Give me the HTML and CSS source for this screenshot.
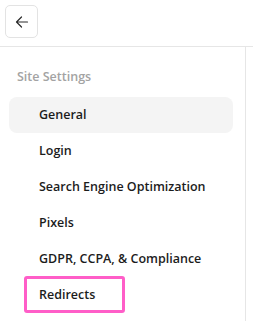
FILE: index.html
```html
<!DOCTYPE html>
<html lang="en">
<head>
  <meta charset="UTF-8" />
  <meta name="viewport" content="width=device-width, initial-scale=1" />
  <title>Site Settings</title>
  <link rel="stylesheet" href="styles.css">
</head>
<body>
  <header class="topbar">
    <button class="back-btn" aria-label="Back">
      <svg width="14" height="14" viewBox="0 0 14 14" fill="none" stroke="#2b2b2b" stroke-width="1.2" stroke-linecap="round" stroke-linejoin="round">
        <path d="M12.5 7H1.5M6.5 2L1.5 7l5 5" />
      </svg>
    </button>
  </header>

  <div class="layout">
    <aside class="sidebar">
      <h4 class="section-title">Site Settings</h4>
      <nav class="nav">
        <a class="nav-item active" href="#">General</a>
        <a class="nav-item" href="#">Login</a>
        <a class="nav-item" href="#">Search Engine Optimization</a>
        <a class="nav-item" href="#">Pixels</a>
        <a class="nav-item" href="#">GDPR, CCPA, &amp; Compliance</a>
        <a class="nav-item highlighted" href="#">Redirects<span class="highlight-box"></span></a>
      </nav>
    </aside>
    <main class="content"></main>
  </div>
</body>
</html>
```

FILE: styles.css
```css
* {
  box-sizing: border-box;
}

body {
  margin: 0;
  font-family: "Open Sans", "Noto Sans", sans-serif;
  color: #1c1c1c;
  background: #fff;
}

.topbar {
  height: 47px;
  padding: 5px;
  border-bottom: 1px solid #e6e6e6;
}

.back-btn {
  width: 33px;
  height: 33px;
  display: flex;
  align-items: center;
  justify-content: center;
  padding: 0;
  background: #fff;
  border: 1px solid #e3e3e3;
  border-radius: 5px;
  cursor: pointer;
}

.layout {
  display: flex;
  min-height: 274px;
}

.sidebar {
  width: 246px;
  border-right: 1px solid #e6e6e6;
  padding: 21px 12px 0 9px;
}

.section-title {
  margin: 0 0 11px 8px;
  font-size: 12.5px;
  font-weight: 600;
  line-height: 18px;
  color: #a3a3a3;
}

.nav {
  display: flex;
  flex-direction: column;
}

.nav-item {
  position: relative;
  display: block;
  height: 36px;
  line-height: 36px;
  padding-left: 30px;
  font-size: 12.5px;
  font-weight: 600;
  color: #1c1c1c;
  text-decoration: none;
  border-radius: 8px;
}

.nav-item.active {
  background: #f4f4f4;
}

.highlight-box {
  position: absolute;
  left: 15px;
  top: -1px;
  width: 101px;
  height: 37px;
  border: 3px solid #ff5ec8;
  border-radius: 3px;
}

.content {
  flex: 1;
}
```
